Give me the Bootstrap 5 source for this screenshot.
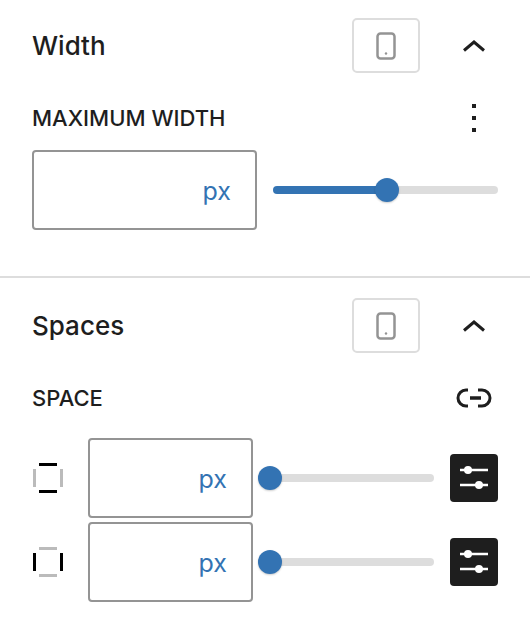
<!DOCTYPE html>
<html lang="en">
<head>
  <meta charset="UTF-8" />
  <meta name="viewport" content="width=device-width, initial-scale=1.0"/>
  <title>Width and spaces</title>
  <link rel="stylesheet" href="https://cdn.jsdelivr.net/npm/bootstrap@5.3.0/dist/css/bootstrap.min.css">
  <style>
    body {
      font-family: Inter, "Liberation Sans", sans-serif;
      color: #1e1e1e;
      background: #fff;
    }
    .panel-block {
      padding: 18px 32px 0;
    }
    .panel-block + .panel-block {
      border-top: 2px solid #ddd;
      padding-top: 20px;
    }
    .block-one { height: 276px; }
    .block-head { height: 55px; }
    .block-title {
      font-size: 26px;
      font-weight: 500;
      line-height: 55px;
      margin: 0;
    }
    .device-btn {
      width: 68px;
      height: 55px;
      padding: 0;
      border: 2px solid #ddd;
      border-radius: 5px;
      background: #fff;
      margin-left: auto;
      display: flex;
      align-items: center;
      justify-content: center;
    }
    .toggle-btn {
      width: 48px;
      height: 48px;
      margin-left: 30px;
      padding: 0;
      border: 0;
      background: none;
      display: flex;
      align-items: center;
      justify-content: center;
    }
    .field-label {
      font-size: 22px;
      font-weight: 500;
      margin: 0;
      line-height: 24px;
    }
    .unit-box {
      height: 80px;
      border: 2px solid #949494;
      border-radius: 4px;
      background: #fff;
      flex: none;
    }
    .unit-box input {
      border: 0;
      min-width: 0;
      flex: 1;
      background: none;
      outline: 0;
      box-shadow: none;
    }
    .unit-text {
      color: #3373b3;
      font-size: 25px;
      line-height: 1;
      padding-top: 2px;
      padding-right: 24px;
    }
    .box-wide { width: 225px; }
    .box-narrow { width: 165px; }
    .panel-range {
      --val: 0%;
      height: 24px;
      flex: 1;
      min-width: 0;
    }
    .panel-range::-webkit-slider-runnable-track {
      height: 8px;
      border-radius: 4px;
      background: linear-gradient(to right, #3373b3 var(--val), #ddd var(--val));
    }
    .panel-range::-webkit-slider-thumb {
      width: 24px;
      height: 24px;
      margin-top: -8px;
      border-radius: 50%;
      background: #3373b3;
      box-shadow: 0 1px 2px rgba(0,0,0,.2);
    }
    .range-gap { margin-left: 5px; }
    .icon-cell { width: 56px; flex: none; }
    .tune-btn {
      width: 48px;
      height: 48px;
      padding: 0;
      border: 0;
      border-radius: 4px;
      background: #1e1e1e;
      flex: none;
      display: flex;
      align-items: center;
      justify-content: center;
    }
    .label-row-one { height: 24px; margin-top: 33px; margin-bottom: 20px; }
    .label-row-two { height: 24px; margin-top: 33px; margin-bottom: 28px; }
    .end-icon { width: 48px; display: flex; justify-content: center; flex: none; }
    .space-row { height: 80px; margin-bottom: 4px; }
  </style>
</head>
<body>
  <!-- Width -->
  <section class="panel-block block-one">
    <div class="block-head d-flex align-items-center">
      <h2 class="block-title">Width</h2>
      <button type="button" class="device-btn" aria-label="Device">
        <svg width="22" height="30" viewBox="0 0 22 30"><rect x="2.5" y="2.5" width="17" height="25" rx="3" fill="none" stroke="#949494" stroke-width="2.5"/><circle cx="11" cy="22.5" r="1.2" fill="#949494"/></svg>
      </button>
      <button type="button" class="toggle-btn" aria-label="Collapse">
        <svg width="24" height="14" viewBox="0 0 24 14"><path d="M2 11.5 12 3l10 8.5" fill="none" stroke="#1e1e1e" stroke-width="3"/></svg>
      </button>
    </div>
    <div class="label-row-one d-flex align-items-center justify-content-between">
      <p class="field-label">MAXIMUM WIDTH</p>
      <div class="end-icon">
        <svg width="4" height="28" viewBox="0 0 4 28" fill="#1e1e1e"><rect width="4" height="4"/><rect y="12" width="4" height="4"/><rect y="24" width="4" height="4"/></svg>
      </div>
    </div>
    <div class="d-flex align-items-center gap-3">
      <div class="unit-box box-wide d-flex align-items-center">
        <input type="text" class="form-control" aria-label="Maximum width">
        <span class="unit-text">px</span>
      </div>
      <input type="range" class="form-range panel-range" min="0" max="100" value="50.5" step="0.5" style="--val: 50.5%" aria-label="Maximum width">
    </div>
  </section>

  <!-- Spaces -->
  <section class="panel-block">
    <div class="block-head d-flex align-items-center">
      <h2 class="block-title">Spaces</h2>
      <button type="button" class="device-btn" aria-label="Device">
        <svg width="22" height="30" viewBox="0 0 22 30"><rect x="2.5" y="2.5" width="17" height="25" rx="3" fill="none" stroke="#949494" stroke-width="2.5"/><circle cx="11" cy="22.5" r="1.2" fill="#949494"/></svg>
      </button>
      <button type="button" class="toggle-btn" aria-label="Collapse">
        <svg width="24" height="14" viewBox="0 0 24 14"><path d="M2 11.5 12 3l10 8.5" fill="none" stroke="#1e1e1e" stroke-width="3"/></svg>
      </button>
    </div>
    <div class="label-row-two d-flex align-items-center justify-content-between">
      <p class="field-label">SPACE</p>
      <div class="end-icon">
        <svg width="36" height="20" viewBox="0 0 36 20" fill="none" stroke="#1e1e1e" stroke-width="3"><path d="M12 2h-2a8 8 0 0 0 0 16h2M22 2h4a8 8 0 0 1 0 16h-4"/><path stroke-width="3.5" d="M14 10h11"/></svg>
      </div>
    </div>
    <div class="space-row d-flex align-items-center">
      <div class="icon-cell">
        <svg width="32" height="32" viewBox="-1 -1 32 32"><path d="M6 1.5h18M6 28.5h18" stroke="#000" stroke-width="3"/><path d="M1.5 6v18M28.5 6v18" stroke="#bbb" stroke-width="3"/></svg>
      </div>
      <div class="unit-box box-narrow d-flex align-items-center">
        <input type="text" class="form-control" aria-label="Vertical space">
        <span class="unit-text">px</span>
      </div>
      <input type="range" class="form-range panel-range range-gap" min="0" max="100" value="0" aria-label="Vertical space">
      <button type="button" class="tune-btn ms-3" aria-label="Custom">
        <svg width="28" height="24" viewBox="0 0 28 24" fill="#fff"><path d="M0 2.7h28v2.6H0zM0 17.7h28v2.6H0z"/><circle cx="8" cy="4" r="4"/><circle cx="19" cy="19" r="4"/></svg>
      </button>
    </div>
    <div class="space-row d-flex align-items-center">
      <div class="icon-cell">
        <svg width="32" height="32" viewBox="-1 -1 32 32"><path d="M6 1.5h18M6 28.5h18" stroke="#bbb" stroke-width="3"/><path d="M1.5 6v18M28.5 6v18" stroke="#000" stroke-width="3"/></svg>
      </div>
      <div class="unit-box box-narrow d-flex align-items-center">
        <input type="text" class="form-control" aria-label="Horizontal space">
        <span class="unit-text">px</span>
      </div>
      <input type="range" class="form-range panel-range range-gap" min="0" max="100" value="0" aria-label="Horizontal space">
      <button type="button" class="tune-btn ms-3" aria-label="Custom">
        <svg width="28" height="24" viewBox="0 0 28 24" fill="#fff"><path d="M0 2.7h28v2.6H0zM0 17.7h28v2.6H0z"/><circle cx="8" cy="4" r="4"/><circle cx="19" cy="19" r="4"/></svg>
      </button>
    </div>
  </section>

  <script src="https://cdn.jsdelivr.net/npm/bootstrap@5.3.0/dist/js/bootstrap.bundle.min.js"></script>
</body>
</html>
